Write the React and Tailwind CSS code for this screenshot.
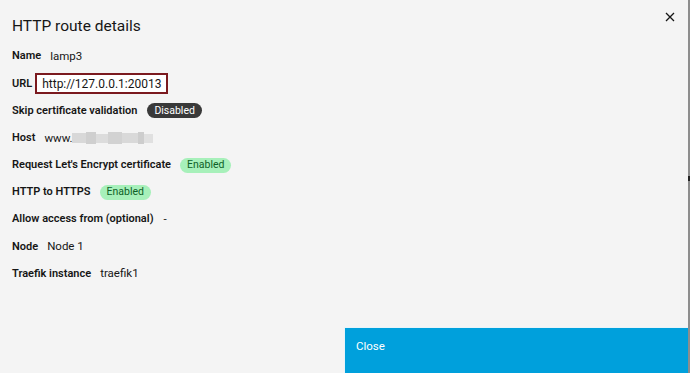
import React from "react";

const font = { fontFamily: 'Roboto, "Noto Sans", sans-serif' };

function Badge({ tone, children }) {
  const cls =
    tone === "dark"
      ? "bg-[#393939] text-white"
      : "bg-[#a7f0ba] text-[#0e6027]";
  return (
    <span className={`inline-flex h-[15px] items-center rounded-full px-[7px] text-[10.5px] leading-none ${cls}`}>
      {children}
    </span>
  );
}

function Row({ label, children, gap = "gap-[9px]" }) {
  return (
    <div className={`flex h-[27.2px] items-center ${gap}`}>
      <span className="text-[11px] font-semibold text-[#161616]">{label}</span>
      {children}
    </div>
  );
}

function BlurredHost() {
  return (
    <span className="ml-[-1px] inline-flex h-[13px] items-center">
      <span className="h-[10px] w-[14px] bg-[#d8d8d8]" />
      <span className="h-[12px] w-[10px] bg-[#cfcfcf]" />
      <span className="h-[9px] w-[12px] bg-[#dcdcdc]" />
      <span className="h-[12px] w-[14px] bg-[#d2d2d2]" />
      <span className="h-[10px] w-[16px] bg-[#d9d9d9]" />
      <span className="h-[12px] w-[6px] bg-[#cdcdcd]" />
      <span className="h-[9px] w-[9px] bg-[#e0e0e0]" />
    </span>
  );
}

export default function App() {
  return (
    <div className="flex h-[373px] w-[690px] overflow-hidden bg-[#8d8d8d]" style={font}>
      <div className="flex w-[688px] flex-col bg-[#f4f4f4] text-[#161616]">
        <div className="flex items-start justify-between pl-[12px] pr-[11px] pt-[15px]">
          <h2 className="text-[15.5px] font-normal leading-[22px]">HTTP route details</h2>
          <div className="mt-[-5px] p-[2px] text-[#161616]">
            <svg width="10" height="10" viewBox="0 0 10 10" fill="none" stroke="currentColor" strokeWidth="1.3">
              <path d="M1 1l8 8M9 1l-8 8" />
            </svg>
          </div>
        </div>

        <div className="mt-[6px] flex flex-col pl-[12px] text-[11.5px]">
          <Row label="Name">
            <span>lamp3</span>
          </Row>
          <Row label="URL" gap="gap-[3px]">
            <span className="flex h-[21px] items-center border-2 border-[#7b1a1f] bg-white px-[5px] text-[12px]">
              http://127.0.0.1:20013
            </span>
          </Row>
          <Row label="Skip certificate validation" gap="gap-[10px]">
            <Badge tone="dark">Disabled</Badge>
          </Row>
          <Row label="Host">
            <span className="flex items-center">
              <span>www.</span>
              <BlurredHost />
            </span>
          </Row>
          <Row label="Request Let's Encrypt certificate">
            <Badge>Enabled</Badge>
          </Row>
          <Row label="HTTP to HTTPS">
            <Badge>Enabled</Badge>
          </Row>
          <Row label="Allow access from (optional)" gap="gap-[10px]">
            <span>-</span>
          </Row>
          <Row label="Node">
            <span>Node 1</span>
          </Row>
          <Row label="Traefik instance">
            <span>traefik1</span>
          </Row>
        </div>

        <div className="mt-auto grid grid-cols-2">
          <div />
          <div className="h-[46px] border-l border-t border-[#e6f4fa] bg-[#00a0dc] pl-[11px] pt-[10px] text-[11.5px] leading-[16px] text-white">
            Close
          </div>
        </div>
      </div>
      <div className="flex w-[2px] flex-col">
        <div className="mt-[176px] h-[5px] w-[2px] bg-[#222]" />
      </div>
    </div>
  );
}
